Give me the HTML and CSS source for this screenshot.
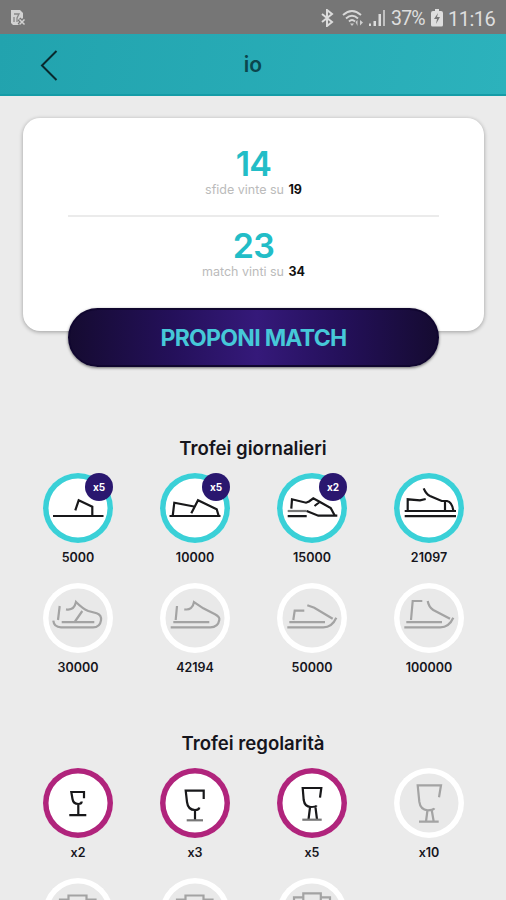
FILE: index.html
```html
<!DOCTYPE html>
<html lang="it">
<head>
<meta charset="utf-8">
<title>io</title>
<link rel="stylesheet" href="styles.css">
</head>
<body>
<div class="status">
  <svg class="sim" width="18" height="18" viewBox="0 0 18 18"><path d="M2 1h9l3 3v5l-3 7H4l-2-2z" fill="#d2d2d2"/><path d="M5 5h5l-2 4v4M5 8v5" stroke="#888" stroke-width="1.3" fill="none"/><path d="M10 10l6 6M16 10l-6 6" stroke="#767676" stroke-width="4"/><path d="M10.500 10.500l5 5M15.500 10.500l-5 5" stroke="#d2d2d2" stroke-width="1.500"/></svg>
  <div class="status-right">
    <svg width="13" height="18" viewBox="0 0 13 18"><path d="M1 5l10 8-5 4V1l5 4-10 8" fill="none" stroke="#dcdcdc" stroke-width="2"/></svg>
    <svg class="wifi" width="22" height="18" viewBox="0 0 22 18"><g fill="none" stroke="#d8d8d8" stroke-width="1.900"><path d="M1 6Q10-2 19 6M4 9.500q6-5.500 12 0M7 12.500q3-3 6 0"/></g><path d="M8 14.500h4L10 17zM13.500 13l2-2v6zM18 11l3 2.500-3 3z" fill="#cfcfcf"/></svg>
    <svg class="signal" width="18" height="18" viewBox="0 0 18 18"><path d="M1 14.500h2V17H1zM5.500 12H8v5H5.500zM10.500 5H13v12h-2.500z" fill="#dcdcdc"/><path d="M15 1h2v16h-2z" fill="#c0c0c0"/></svg>
    <span class="pct">37%</span>
    <svg class="battery" width="12" height="18" viewBox="0 0 12 18"><path d="M4 0h4v2h2q2 0 2 2v12q0 1.500-1.500 1.500h-9Q0 17.500 0 16V4q0-2 2-2h2z" fill="#dedede"/><path d="M7 4L3 10h3l-1 5 4-7H6z" fill="#777"/></svg>
    <span class="clock">11:16</span>
  </div>
</div>
<header class="bar">
  <svg class="back" width="18" height="32" viewBox="0 0 18 32"><path d="M16.500 2L2 16.500 16.500 31" fill="none" stroke="#08292d" stroke-width="2"/></svg>
  <h1>io</h1>
</header>
<main>
  <section class="card">
    <div class="stat"><strong>14</strong><p>sfide vinte su <b>19</b></p></div>
    <div class="stat second"><strong>23</strong><p>match vinti su <b>34</b></p></div>
    <button class="cta"><span>PROPONI MATCH</span></button>
  </section>

  <h2 class="daily">Trofei giornalieri</h2>
  <div class="grid">
    <div class="item"><div class="disc cyan"><svg viewBox="0 0 70 70"><path d="M10 43h50.500M32.300 37.300l3.400-10 13.600 6.400V43"/></svg><i>x5</i></div><span>5000</span></div>
    <div class="item"><div class="disc cyan"><svg viewBox="0 0 70 70"><path d="M9.500 43h51M12.700 43l1.600-13.300L34 33.500M31.300 40.300l6.700-13 18.700 9 2 6.700"/></svg><i>x5</i></div><span>10000</span></div>
    <div class="item"><div class="disc cyan"><svg viewBox="0 0 70 70"><path d="M14.300 35.700L15 26.300l14 3.400 3-1.200 4.300-3.200L43 29l10.700 6 4 7.500M42 29.500L37.500 33M10.700 43.200h19"/><path class="soft" d="M10.700 38h19"/><path d="M29.700 38l11.600 4.700h19"/></svg><i>x2</i></div><span>15000</span></div>
    <div class="item"><div class="disc cyan"><svg viewBox="0 0 70 70"><path d="M10.700 38H62M10.700 43.200H62M13.700 37V26.300L26 27.300l5.700-1.300M29.700 15.300Q32 21 36 23l11.700 5H53q5 1 6.300 9.500M51 37.500V28.500"/></svg></div><span>21097</span></div>
    <div class="item"><div class="disc locked"><svg viewBox="0 0 70 70"><path d="M16.700 23L15 37M23 26.300q8 1.500 10-7.300 7 7 12.300 9l8.400 2.300q5 1.700 4.300 7-1 7-8 7H18q-7 0-7.700-6.600M18.700 39.200h32.600M39.300 28L32 38.500"/></svg></div><span>30000</span></div>
    <div class="item"><div class="disc locked"><svg viewBox="0 0 70 70"><path d="M17 23l-1.300 14M24.300 26.300q8.200 1.500 9.700-7.300l9.300 6.300L55 31.300q5 2.700 4.300 5.700-1.300 7.300-9 7.300H10.700M13.300 39.200h36"/></svg></div><span>42194</span></div>
    <div class="item"><div class="disc locked"><svg viewBox="0 0 70 70"><path d="M16.300 37l1.400-9.300h9.600M30.300 22.300l7 2.500 18.400 11M59.300 34.700Q55 44.300 46.300 44.300h-36M12.300 39.200H48"/></svg></div><span>50000</span></div>
    <div class="item"><div class="disc locked"><svg viewBox="0 0 70 70"><path d="M17 37l1.700-19h9.600M33.700 18q1 6 5.600 9L56 35.700M59.300 34.700Q55 44.300 46.300 44.300h-36M12.300 39.200H48"/></svg></div><span>100000</span></div>
  </div>

  <h2 class="regular">Trofei regolarità</h2>
  <div class="grid">
    <div class="item"><div class="disc pink"><svg viewBox="0 0 70 70"><path d="M41 30.300V24H28.300l1.200 7q.8 5 5.800 5 3.400 0 3.400-2.500M35.300 36v11M26.300 47.200h17"/></svg></div><span>x2</span></div>
    <div class="item"><div class="disc pink"><svg viewBox="0 0 70 70"><path d="M43.700 31v-8.300h-18L27 34q1 8 8 8 4 0 4.300-2.500M35 42v10"/><path class="soft" d="M26.700 52.300H43"/></svg></div><span>x3</span></div>
    <div class="item"><div class="disc pink"><svg viewBox="0 0 70 70"><path d="M43 29.700L44.300 20H25.700l1 12q1 6.700 7 7 5 0 6-1.500M33 39.500l-1.500 12M38.500 39.500l1.500 12"/><path class="soft" d="M25.300 51.700h19.400"/></svg></div><span>x5</span></div>
    <div class="item"><div class="disc locked"><svg viewBox="0 0 70 70"><path d="M45 29.300l2-12H23.700l1.600 16.400q1 8 8.400 8.600 5.600 0 6.600-2M33.500 42L32 53.500M37.700 42l2 11.500M25 53.700h19.700"/></svg></div><span>x10</span></div>
    <div class="item"><div class="disc locked"><svg viewBox="0 0 70 70"><path d="M25.500 30V17.500h18V30M25.500 21.500H17V28M43.500 21.500h9V28"/></svg></div></div>
    <div class="item"><div class="disc locked"><svg viewBox="0 0 70 70"><path d="M25.500 30V17.500h18V30M25.500 21.500H17V28M43.500 21.500h9V28"/></svg></div></div>
    <div class="item"><div class="disc locked"><svg viewBox="0 0 70 70"><path d="M26.300 30V15.300h17.500V30M26.300 19.300H17V28M43.800 19.300H53V28"/></svg></div></div>
  </div>
</main>
</body>
</html>
```
FILE: styles.css
```css
* { box-sizing: border-box; }
html, body { height: 900px; overflow: hidden; }
body { margin: 0; background: #ebebeb; color: #16151c; font-family: Inter, "Liberation Sans", sans-serif; }
h1, h2, p { margin: 0; }
svg { display: block; flex: none; }
.status { height: 34px; background: #767676; display: flex; justify-content: space-between; align-items: center; padding: 1px 12px 0 9px; font-family: Roboto, sans-serif; color: #dedede; font-size: 19px; }
.status-right { display: flex; align-items: center; }
.wifi { margin-left: 8px; }
.signal { margin-left: 4px; }
.pct { margin-left: 5px; width: 34px; font-size: 19.500px; letter-spacing: -.8px; white-space: nowrap; }
.battery { margin-left: 6px; }
.clock { margin-left: 5px; width: 46px; font-size: 20px; letter-spacing: -.5px; }
.pct, .clock { position: relative; top: 1px; }
.bar { height: 62px; background: linear-gradient(100deg, #22a3ae, #2cb2bc); border-bottom: 2px solid #159ca7; display: grid; grid-template-columns: 80px 1fr 80px; align-items: center; }
.back { margin-left: 40px; margin-top: 2px; }
.bar h1 { padding-top: 2px; text-align: center; font-size: 21px; line-height: 28px; font-weight: 600; color: #0b464d; }
main { height: 804px; overflow: hidden; display: flex; flex-direction: column; align-items: center; }
.card { margin: 22px 0 0 1px; width: 461px; height: 213px; flex: none; border-radius: 17px; background: #fff; box-shadow: 0 1px 4px #0005; padding: 26px 45px 0; display: flex; flex-direction: column; }
.stat { flex: none; height: 73px; text-align: center; border-bottom: 2px solid #ebebeb; }
.second { border: 0; padding-top: 9px; height: 91px; }
.stat strong { display: block; font-size: 34px; line-height: 39px; font-weight: 600; letter-spacing: -.7px; color: #22bdc7; }
.stat p { font-size: 12.500px; line-height: 14px; color: #bbb; }
.stat b { color: #111; font-weight: 700; margin-left: 1px; }
.cta { flex: none; width: 371px; height: 59px; border: 2px solid #10062f; border-radius: 30px; padding: 0; background: linear-gradient(90deg, #150b31, #24105a 28%, #35197a 51%, #24105a 74%, #150b31); box-shadow: 0 1px 3px #0008; color: #46c8d8; font: 700 23px/32px Inter, sans-serif; letter-spacing: -.7px; white-space: nowrap; }
h2 { font-size: 18.600px; line-height: 26px; font-weight: 600; text-align: center; }
.daily { margin-top: 104px; }
.regular { margin-top: 37px; }
.grid { display: grid; grid-template-columns: repeat(4, 117px); grid-auto-rows: 110px; margin-top: 12px; width: 468px; margin-left: 1px; }
.item { display: flex; flex-direction: column; align-items: center; }
.item > span { margin-top: 6px; font-size: 12.500px; line-height: 17px; font-weight: 600; }
.disc { width: 70px; height: 70px; flex: none; border-radius: 50%; position: relative; background: #fff; }
.disc svg { width: 70px; height: 70px; fill: none; stroke: #18181a; stroke-width: 2.200; }
.disc .soft { stroke: #777; }
.cyan { box-shadow: inset 0 0 0 5.500px #3ad0d7; }
.pink { box-shadow: inset 0 0 0 5.500px #b0247c; }
.locked { background: #e9e9e9; box-shadow: inset 0 0 0 5.500px #fff; }
.disc.locked svg { stroke: #a3a3a3; }
.disc i { position: absolute; top: 0; right: 0; width: 28px; height: 28px; border-radius: 50%; background: #2a176f; color: #fff; font-size: 10px; line-height: 28px; font-style: normal; font-weight: 700; text-align: center; }
```
